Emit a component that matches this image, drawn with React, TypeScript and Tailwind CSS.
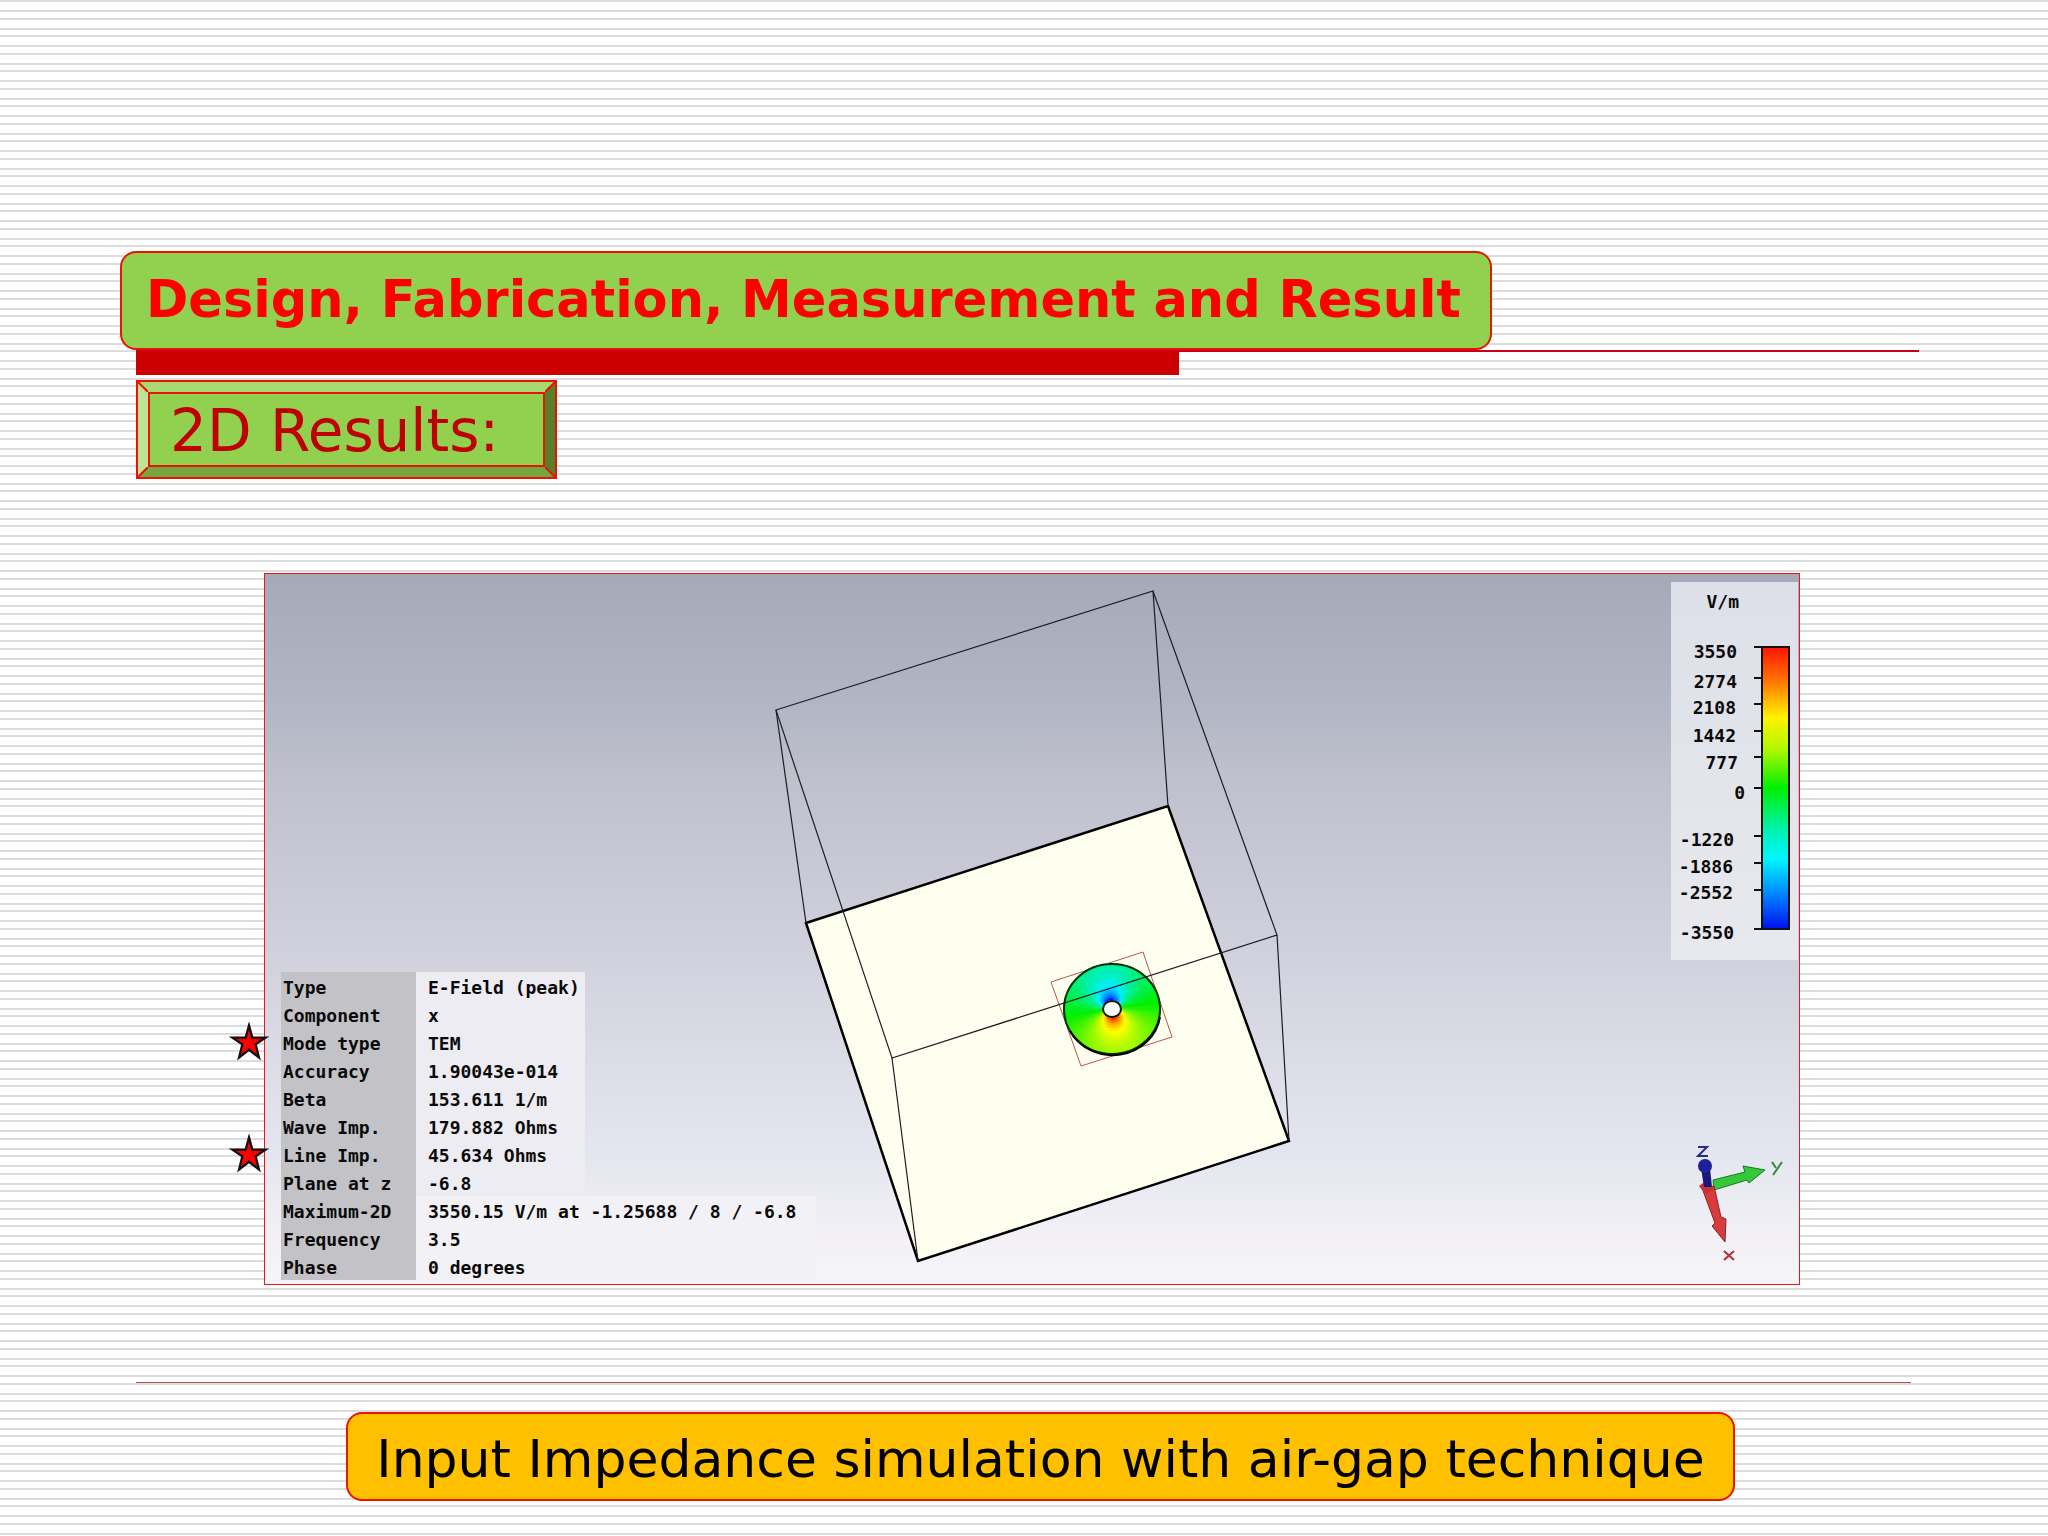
interface FieldRow {
    label: string;
    value: string;
    starred?: boolean;
}

const rows: FieldRow[] = [
    { label: "Type", value: "E-Field (peak)" },
    { label: "Component", value: "x" },
    { label: "Mode type", value: "TEM", starred: true },
    { label: "Accuracy", value: "1.90043e-014" },
    { label: "Beta", value: "153.611 1/m" },
    { label: "Wave Imp.", value: "179.882 Ohms" },
    { label: "Line Imp.", value: "45.634 Ohms", starred: true },
    { label: "Plane at z", value: "-6.8" },
    { label: "Maximum-2D", value: "3550.15 V/m at -1.25688 / 8 / -6.8" },
    { label: "Frequency", value: "3.5" },
    { label: "Phase", value: "0 degrees" },
];

// label baseline, right edge of the label, tick position
const scale = [
    { text: "3550", y: 76, x: 66, tick: 65 },
    { text: "2774", y: 106, x: 66, tick: 96 },
    { text: "2108", y: 132, x: 65, tick: 122 },
    { text: "1442", y: 160, x: 65, tick: 149 },
    { text: "777", y: 187, x: 67, tick: 175 },
    { text: "0", y: 217, x: 74, tick: 206 },
    { text: "-1220", y: 264, x: 63, tick: 254 },
    { text: "-1886", y: 291, x: 62, tick: 281 },
    { text: "-2552", y: 317, x: 62, tick: 308 },
    { text: "-3550", y: 357, x: 63, tick: 347 },
];

const stops: [number, number[]][] = [
    [-1, [0, 0, 255]],
    [-0.5, [0, 240, 255]],
    [0, [0, 240, 0]],
    [0.5, [255, 255, 0]],
    [1, [255, 20, 0]],
];

function fieldColor(v: number) {
    for (let i = 1; i < stops.length; i++) {
        const [hi, b] = stops[i];
        const [lo, a] = stops[i - 1];
        if (v <= hi) {
            const t = (v - lo) / (hi - lo);
            return `rgb(${a.map((c, k) => Math.round(c + (b[k] - c) * t)).join(",")})`;
        }
    }
    return "rgb(255,20,0)";
}

// coaxial port: the field falls off from the inner conductor outwards
function FieldDisk() {
    const cells = [];
    const sectors = 60;
    const rings = 14;
    for (let r = 0; r < rings; r++) {
        const r0 = 9 + (38 * r) / rings;
        for (let s = 0; s < sectors; s++) {
            const a0 = (s / sectors) * Math.PI * 2;
            const a1 = ((s + 1.3) / sectors) * Math.PI * 2;
            const r1 = 47;
            const v = Math.cos(a0 - 1.35) * Math.pow(9 / (r0 + 1), 0.7);
            cells.push(
                <path
                    key={`${r}-${s}`}
                    fill={fieldColor(v)}
                    d={`M${r0 * Math.cos(a0)} ${r0 * Math.sin(a0)}L${r1 * Math.cos(a0)} ${r1 * Math.sin(a0)}L${r1 * Math.cos(a1)} ${r1 * Math.sin(a1)}L${r0 * Math.cos(a1)} ${r0 * Math.sin(a1)}Z`}
                />
            );
        }
    }
    return (
        <g transform="translate(847 435)">
            <g transform="scale(1.03 0.97)">{cells}</g>
            <ellipse rx="48" ry="45" fill="none" stroke="#063006" strokeWidth="2" />
            <path d="M-42 22A48 45 0 0 0 48 8" fill="none" stroke="#000" strokeWidth="2" />
            <ellipse rx="9" ry="8" fill="#fff" stroke="#111" strokeWidth="2" />
        </g>
    );
}

function Scene() {
    return (
        <svg viewBox="0 0 1534 710" className="block w-full" role="img" aria-label="E-field in the port plane">
            <path d="M541 349L903 232L1024 567L653 687Z" fill="#fffff0" stroke="#000" strokeWidth="2.500" />
            <path d="M786 408L878 378L907 463L816 492Z" fill="none" stroke="#b9534d" strokeWidth="1" />
            <FieldDisk />
            <g fill="none" stroke="#1c1c24" strokeWidth="1.200">
                <path d="M511 136L888 17L1012 361L627 484Z" />
                <path d="M511 136L541 349M888 17L903 232M1012 361L1024 567M627 484L653 687" />
            </g>
            <Axes />
        </svg>
    );
}

function Axes() {
    return (
        <g>
            <path d="M1448 606L1480 598L1478 592L1500 596L1484 609L1482 606L1449 616Z" fill="#35c83c" stroke="#177a20" />
            <path d="M1437 614L1449 612L1456 643L1461 645L1460 668L1447 652L1450 649Z" fill="#d83a3e" stroke="#8f2226" />
            <path d="M1434 612L1442 606L1449 616L1440 620Z" fill="#c5333b" />
            <path d="M1436 594L1445 594L1447 613L1439 613Z" fill="#17177c" />
            <circle cx="1440" cy="592" r="7" fill="#1f1f9c" />
            <g fill="none" strokeWidth="2">
                <path d="M1433 573H1442L1433 582H1443" stroke="#2a2a8c" />
                <path d="M1507 588L1511 594M1517 588L1508 601" stroke="#2f8a3b" />
                <path d="M1459 677L1469 686M1469 677L1459 686" stroke="#ad3038" />
            </g>
        </g>
    );
}

function Legend() {
    return (
        <svg
            viewBox="0 0 127 378"
            className="absolute top-2 right-px h-[378px] w-[127px] bg-linear-to-b from-[#dde0e8] to-[#e8e9ee]"
            role="img"
            aria-label="Field strength scale"
        >
            <defs>
                <linearGradient id="field" x1="0" y1="0" x2="0" y2="1">
                    <stop offset="0" stopColor="#ff1400" />
                    <stop offset="0.12" stopColor="#ff7400" />
                    <stop offset="0.25" stopColor="#fff200" />
                    <stop offset="0.36" stopColor="#b4f800" />
                    <stop offset="0.5" stopColor="#00f000" />
                    <stop offset="0.64" stopColor="#00f2a8" />
                    <stop offset="0.75" stopColor="#00f6ff" />
                    <stop offset="0.87" stopColor="#008cff" />
                    <stop offset="1" stopColor="#0010f0" />
                </linearGradient>
            </defs>
            <rect x="91" y="65" width="27" height="282" fill="url(#field)" stroke="#111" strokeWidth="2" />
            <g className="font-['DejaVu_Sans_Mono',monospace] text-[18px] font-bold" fill="#0a0a0a" textAnchor="end">
                <text x="68" y="26">V/m</text>
                {scale.map((s) => (
                    <text key={s.text} x={s.x} y={s.y}>{s.text}</text>
                ))}
            </g>
            {scale.map((s) => (
                <path key={s.text} d={`M83 ${s.tick}H91`} stroke="#111" strokeWidth="2" />
            ))}
        </svg>
    );
}

function Star() {
    return (
        <svg viewBox="0 0 36 36" className="absolute -top-1.5 -left-[52px] size-10" aria-hidden="true">
            <path
                d="M18 3L21 14H33L24 20L27 32L18 25L9 32L12 20L3 14H15Z"
                fill="#f00"
                stroke="#111"
                strokeWidth="2"
            />
        </svg>
    );
}

function FieldTable() {
    return (
        <table className="absolute bottom-1 left-4 border-collapse text-left font-['DejaVu_Sans_Mono',monospace] text-[18px] leading-6 font-bold text-[#0a0a0a]">
            <tbody>
                {rows.map((row, i) => (
                    <tr key={row.label} className="h-7">
                        <th scope="row" className="relative w-[135px] bg-[#c3c3c7] p-0 pt-1 pl-0.5 font-bold">
                            {row.starred && <Star />}
                            {row.label}
                        </th>
                        <td className="p-0">
                            <div className={i < 8 ? "w-[169px] bg-[#edecf2] pt-1 pl-3" : "w-[400px] bg-[#f2f1f5] pt-1 pl-3"}>
                                {row.value}
                            </div>
                        </td>
                    </tr>
                ))}
            </tbody>
        </table>
    );
}

function Corner({ className }: { className: string }) {
    return (
        <svg viewBox="0 0 10 10" className={`absolute size-2.5 ${className}`} aria-hidden="true">
            <path d="M0 0L10 10" stroke="#e81500" strokeWidth="2" />
        </svg>
    );
}

export default function App() {
    return (
        <main className="min-h-screen bg-white bg-[linear-gradient(#dcdcdc_2px,transparent_2px,transparent_10px,#dcdcdc_10px,#dcdcdc_12px,transparent_12px,transparent_18px,#dcdcdc_18px,#dcdcdc_20px,transparent_20px,transparent_28px,#dcdcdc_28px,#dcdcdc_30px,transparent_30px)] bg-[length:100%_35px] pt-[251px] pb-[35px] font-['DejaVu_Sans',sans-serif]">
            <header>
                <h1 className="ml-[120px] flex h-[99px] w-[67%] items-center rounded-2xl border-2 border-[#e81500] bg-[#92d050] pl-6 text-[51px] font-bold whitespace-nowrap text-[#f00]">
                    Design, Fabrication, Measurement and Result
                </h1>
                <div className="mr-[129px] ml-[136px] border-t-2 border-[#c8001c]">
                    <div className="h-[23px] w-[58.5%] bg-[#c00]" />
                </div>
            </header>

            <div className="mt-[5px] ml-[136px] w-[421px] border-2 border-[#e81500]">
                <div className="relative border-10 border-t-[#a8d973] border-r-[#587f2c] border-b-[#75a640] border-l-[#bee396]">
                    <Corner className="-top-2.5 -left-2.5" />
                    <Corner className="-top-2.5 -right-2.5 -scale-x-100" />
                    <Corner className="-bottom-2.5 -left-2.5 -scale-x-100" />
                    <Corner className="-right-2.5 -bottom-2.5" />
                    <h2 className="border-2 border-[#e81500] bg-[#92d050] pt-1 pl-5 text-[58px] leading-[67px] whitespace-nowrap text-[#c00000]">
                        2D Results:
                    </h2>
                </div>
            </div>

            <section className="relative mt-[94px] mr-[248px] ml-[264px] border border-[#e81818] bg-[linear-gradient(#a5a9b8,#b1b6c5_18%,#bdbfca_27%,#d0d0dc_52%,#dcdce7_68%,#e4e6ef_82%,#f2f0f5_93%,#f6f5f8)]">
                <Scene />
                <Legend />
                <FieldTable />
            </section>

            <footer className="mt-[97px]">
                <hr className="mr-[137px] ml-[136px] border-t border-[#b9504c]" />
                <p className="mt-[29px] mr-[313px] ml-[346px] flex h-[89px] items-center justify-center rounded-2xl border-2 border-[#e81500] bg-[#ffc000] pt-1 text-[52px] whitespace-nowrap text-black">
                    Input Impedance simulation with air-gap technique
                </p>
            </footer>
        </main>
    );
}
